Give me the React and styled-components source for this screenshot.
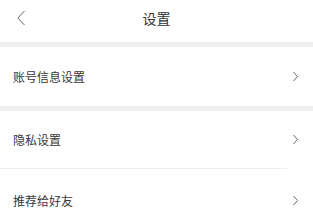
import React from 'react';
import styled, { createGlobalStyle } from 'styled-components';

const GlobalStyle = createGlobalStyle`
  html, body {
    margin: 0;
    padding: 0;
    background: #fff;
    font-family: "Noto Sans CJK SC", "Noto Sans", sans-serif;
  }
`;

const Page = styled.div`
  width: 313px;
  display: flex;
  flex-direction: column;
  color: #333;
`;

const Header = styled.div`
  height: 36px;
  padding-bottom: 6px;
  display: flex;
  align-items: center;
  justify-content: center;
  position: relative;
`;

const BackButton = styled.div`
  position: absolute;
  left: 16px;
  top: 10px;
  width: 10px;
  height: 16px;
  display: flex;
`;

const Title = styled.h1`
  margin: 0;
  font-size: 14px;
  font-weight: 400;
  color: #333;
`;

const Band = styled.div`
  height: 5px;
  background: #f0f0f0;
`;

const Row = styled.div`
  height: ${(p) => p.h}px;
  display: flex;
  align-items: center;
  justify-content: space-between;
  padding: 0 14px 0 13px;
  padding-top: ${(p) => p.shift || 0}px;
  box-sizing: border-box;
  font-size: 12px;
  color: #383838;
`;

const Divider = styled.div`
  height: 1px;
  background: #eeeeee;
  margin-right: 26px;
`;

const Chevron = () => (
  <svg width="7" height="11" viewBox="0 0 7 11">
    <path d="M1.5 1 L5.5 5.5 L1.5 10" fill="none" stroke="#666" strokeWidth="1" />
  </svg>
);

const BackIcon = () => (
  <svg width="10" height="16" viewBox="0 0 10 16">
    <path d="M8.5 1 L1.8 8 L8.5 15" fill="none" stroke="#666" strokeWidth="1" />
  </svg>
);

const App = () => {
  return (
    <Page>
      <GlobalStyle />
      <Header>
        <BackButton>
          <BackIcon />
        </BackButton>
        <Title>设置</Title>
      </Header>
      <Band />
      <Row h={59}>
        <span>账号信息设置</span>
        <Chevron />
      </Row>
      <Band />
      <Row h={57}>
        <span>隐私设置</span>
        <Chevron />
      </Row>
      <Divider />
      <Row h={60} shift={2}>
        <span>推荐给好友</span>
        <Chevron />
      </Row>
    </Page>
  );
};

export default App;
